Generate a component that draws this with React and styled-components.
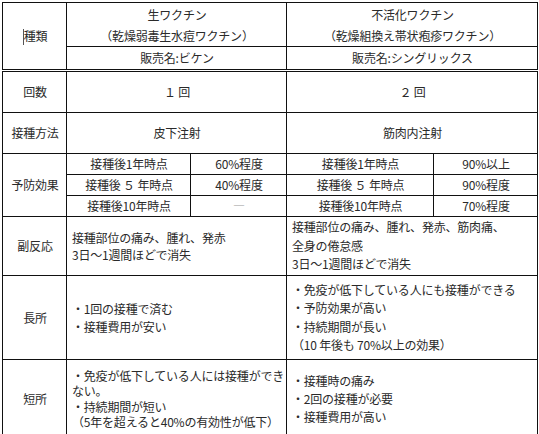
import styled, { createGlobalStyle } from 'styled-components'

const GlobalStyle = createGlobalStyle`
  html, body {
    margin: 0;
    padding: 0;
    background: #fff;
  }
  body {
    font-family: "Noto Sans CJK JP", "Noto Sans", sans-serif;
    color: #2a2a2a;
  }
`

const Page = styled.div`
  padding: 2px 0 0 2px;
`

const Table = styled.table`
  border-collapse: collapse;
  table-layout: fixed;
  width: 536px;
  font-size: 12px;
  letter-spacing: -0.2px;
`

const Cell = styled.td`
  border: 1px solid #111;
  padding: 0 4px 0 5px;
  height: ${(p) => p.$h || 20}px;
  line-height: ${(p) => p.$lh || 18}px;
  text-align: ${(p) => p.$align || 'center'};
  vertical-align: middle;
  white-space: nowrap;
  color: ${(p) => (p.$muted ? '#999' : 'inherit')};
`

const HeadCell = styled(Cell)`
  border-bottom: ${(p) => (p.$double ? '3px double #111' : '1px solid #111')};
`

const Caret = styled.span`
  display: inline-block;
  width: 1px;
  height: 16px;
  background: #555;
  vertical-align: middle;
  margin-top: -2px;
`

const Lines = ({ items }) => items.map((t, i) => <div key={i}>{t}</div>)

export default function App() {
  return (
    <Page>
      <GlobalStyle />
      <Table>
        <colgroup>
          <col style={{ width: 64 }} />
          <col style={{ width: 124 }} />
          <col style={{ width: 96 }} />
          <col style={{ width: 147 }} />
          <col style={{ width: 104 }} />
        </colgroup>
        <tbody>
          <tr>
            <HeadCell rowSpan={2} $double>
              <Caret />種類
            </HeadCell>
            <Cell colSpan={2} $h={43} $lh={21}>
              <Lines items={['生ワクチン', '（乾燥弱毒生水痘ワクチン）']} />
            </Cell>
            <Cell colSpan={2} $h={43} $lh={21}>
              <Lines items={['不活化ワクチン', '（乾燥組換え帯状疱疹ワクチン）']} />
            </Cell>
          </tr>
          <tr>
            <HeadCell colSpan={2} $h={22} $double>販売名:ビケン</HeadCell>
            <HeadCell colSpan={2} $h={22} $double>販売名:シングリックス</HeadCell>
          </tr>
          <tr>
            <Cell $h={40}>回数</Cell>
            <Cell colSpan={2} $h={40}>１ 回</Cell>
            <Cell colSpan={2} $h={40}>２ 回</Cell>
          </tr>
          <tr>
            <Cell $h={40}>接種方法</Cell>
            <Cell colSpan={2} $h={40}>皮下注射</Cell>
            <Cell colSpan={2} $h={40}>筋肉内注射</Cell>
          </tr>
          <tr>
            <Cell rowSpan={3}>予防効果</Cell>
            <Cell>接種後1年時点</Cell>
            <Cell>60%程度</Cell>
            <Cell>接種後1年時点</Cell>
            <Cell>90%以上</Cell>
          </tr>
          <tr>
            <Cell>接種後 ５ 年時点</Cell>
            <Cell>40%程度</Cell>
            <Cell>接種後 ５ 年時点</Cell>
            <Cell>90%程度</Cell>
          </tr>
          <tr>
            <Cell>接種後10年時点</Cell>
            <Cell $muted>―</Cell>
            <Cell>接種後10年時点</Cell>
            <Cell>70%程度</Cell>
          </tr>
          <tr>
            <Cell $h={58}>副反応</Cell>
            <Cell colSpan={2} $h={58} $lh={17} $align="left">
              <Lines items={['接種部位の痛み、腫れ、発赤', '3日～1週間ほどで消失']} />
            </Cell>
            <Cell colSpan={2} $h={58} $lh={18.5} $align="left">
              <Lines items={['接種部位の痛み、腫れ、発赤、筋肉痛、', '全身の倦怠感', '3日～1週間ほどで消失']} />
            </Cell>
          </tr>
          <tr>
            <Cell $h={83}>長所</Cell>
            <Cell colSpan={2} $h={83} $lh={18} $align="left">
              <Lines items={['・1回の接種で済む', '・接種費用が安い']} />
            </Cell>
            <Cell colSpan={2} $h={83} $lh={18.5} $align="left">
              <Lines
                items={[
                  '・免疫が低下している人にも接種ができる',
                  '・予防効果が高い',
                  '・持続期間が長い',
                  '（10 年後も 70%以上の効果）',
                ]}
              />
            </Cell>
          </tr>
          <tr>
            <Cell $h={77}>短所</Cell>
            <Cell colSpan={2} $h={77} $lh={15.5} $align="left">
              <Lines
                items={[
                  '・免疫が低下している人には接種ができ',
                  'ない。',
                  '・持続期間が短い',
                  '（5年を超えると40%の有効性が低下）',
                ]}
              />
            </Cell>
            <Cell colSpan={2} $h={77} $lh={18} $align="left">
              <Lines items={['・接種時の痛み', '・2回の接種が必要', '・接種費用が高い']} />
            </Cell>
          </tr>
        </tbody>
      </Table>
    </Page>
  )
}
